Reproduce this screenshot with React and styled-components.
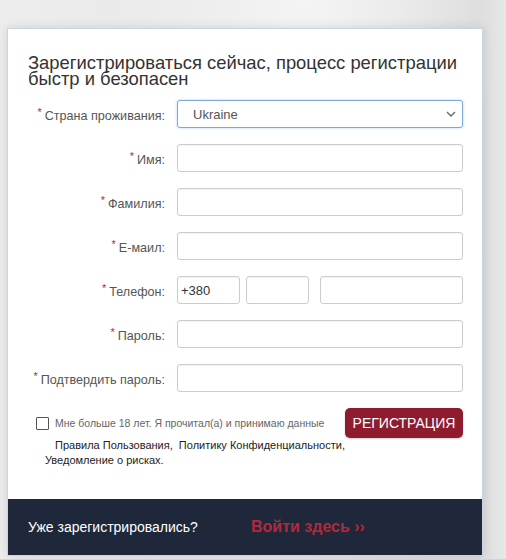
import React from 'react';
import styled, { createGlobalStyle } from 'styled-components';

const GlobalStyle = createGlobalStyle`
  html, body {
    margin: 0;
    padding: 0;
  }
  body {
    font-family: "Liberation Sans", Arial, sans-serif;
    background: #e9e9e9;
  }
  * {
    box-sizing: border-box;
  }
`;

const fields = [
  { label: 'Имя:' },
  { label: 'Фамилия:' },
  { label: 'Е-маил:' },
];

const App = () => {
  return (
    <>
      <GlobalStyle />
      <Page>
        <Card>
          <Body>
            <Title>Зарегистрироваться сейчас, процесс регистрации быстр и безопасен</Title>

            <Form>
              <Row>
                <Label><Star>*</Star>Страна проживания:</Label>
                <SelectWrap>
                  <Select defaultValue="UA">
                    <option value="UA">Ukraine</option>
                  </Select>
                  <Chevron width="10" height="6" viewBox="0 0 10 6">
                    <path d="M1 1l4 4 4-4" fill="none" stroke="#666" strokeWidth="1.3" />
                  </Chevron>
                </SelectWrap>
              </Row>

              {fields.map((f) => (
                <Row key={f.label}>
                  <Label><Star>*</Star>{f.label}</Label>
                  <Input type="text" />
                </Row>
              ))}

              <Row>
                <Label><Star>*</Star>Телефон:</Label>
                <PhoneGroup>
                  <Input type="text" defaultValue="+380" />
                  <Input type="text" />
                  <Input type="text" />
                </PhoneGroup>
              </Row>

              <Row>
                <Label><Star>*</Star>Пароль:</Label>
                <Input type="password" />
              </Row>

              <Row>
                <Label><Star>*</Star>Подтвердить пароль:</Label>
                <Input type="password" />
              </Row>
            </Form>

            <Terms>
              <Agreement>
                <CheckLine>
                  <Checkbox type="checkbox" />
                  <CheckText>Мне больше 18 лет. Я прочитал(а) и принимаю данные</CheckText>
                </CheckLine>
                <DocLine $indent={47}>Правила Пользования,&nbsp;&nbsp;Политику Конфиденциальности,</DocLine>
                <DocLine $indent={37}>Уведомление о рисках.</DocLine>
              </Agreement>
              <SubmitButton type="button">РЕГИСТРАЦИЯ</SubmitButton>
            </Terms>
          </Body>

          <Footer>
            <FooterText>Уже зарегистрировались?</FooterText>
            <LoginLink href="#">Войти здесь ››</LoginLink>
          </Footer>
        </Card>
      </Page>
    </>
  );
};

// Styled Components
const Page = styled.div`
  width: 506px;
  height: 559px;
  padding: 28px 23px 0 7px;
  overflow: hidden;
  background:
    radial-gradient(ellipse at 60% 0%, #f4f4f4 0%, rgba(244, 244, 244, 0) 45%),
    linear-gradient(90deg, #ededed 0%, #e6e6e6 60%, #dcdcdc 95%, #e8e8e8 100%);
`;

const Card = styled.div`
  width: 476px;
  background: #fff;
  border: 1px solid #c9d5e2;
  box-shadow: 0 0 10px rgba(0, 0, 0, 0.12);
`;

const Body = styled.div`
  padding: 26px 19px 31px 0;
`;

const Title = styled.h1`
  margin: 0 0 13px 20px;
  font-size: 18.4px;
  line-height: 16px;
  font-weight: 400;
  color: #333;
  max-width: 445px;
`;

const Form = styled.div`
  display: flex;
  flex-direction: column;
  gap: 16px;
`;

const Row = styled.div`
  display: grid;
  grid-template-columns: 157px 1fr;
  column-gap: 12px;
  align-items: center;
  height: 28px;
`;

const Label = styled.label`
  text-align: right;
  font-size: 12.6px;
  color: #555;
  padding-top: 3px;
  white-space: nowrap;
`;

const Star = styled.span`
  color: #c0243a;
  font-size: 11px;
  position: relative;
  top: -4px;
  margin-right: 3px;
`;

const SelectWrap = styled.div`
  position: relative;
  height: 28px;
`;

const Select = styled.select`
  appearance: none;
  width: 100%;
  height: 28px;
  border: 1px solid #7fa8d9;
  border-radius: 3px;
  background: #fff;
  padding: 0 0 0 15px;
  font-family: "Liberation Sans", Arial, sans-serif;
  font-size: 13px;
  color: #555;
  box-shadow: 0 0 3px rgba(102, 153, 221, 0.45);
  outline: none;
`;

const Chevron = styled.svg`
  position: absolute;
  right: 7px;
  top: 11px;
  pointer-events: none;
`;

const Input = styled.input`
  width: 100%;
  height: 28px;
  border: 1px solid #ccc;
  border-radius: 3px;
  background: #fff;
  padding: 0 3px;
  font-family: "Liberation Sans", Arial, sans-serif;
  font-size: 13px;
  color: #333;
  box-shadow: inset 0 1px 1px rgba(0, 0, 0, 0.05);
  outline: none;
`;

const PhoneGroup = styled.div`
  display: grid;
  grid-template-columns: 63px 63px 1fr;
  column-gap: 6px;
  height: 28px;

  & > input:last-child {
    margin-left: 5px;
    width: calc(100% - 5px);
  }
`;

const Terms = styled.div`
  display: flex;
  justify-content: space-between;
  align-items: flex-start;
  margin-top: 16px;
`;

const Agreement = styled.div`
  display: flex;
  flex-direction: column;
`;

const CheckLine = styled.div`
  display: flex;
  align-items: center;
  height: 30px;
  padding-left: 28px;
`;

const Checkbox = styled.input`
  appearance: none;
  width: 13px;
  height: 13px;
  margin: 0 6px 0 0;
  border: 1px solid #555;
  border-radius: 1px;
  background: #fff;
`;

const CheckText = styled.span`
  font-size: 10.5px;
  color: #666;
`;

const DocLine = styled.div`
  padding-left: ${(p) => p.$indent}px;
  font-size: 11px;
  line-height: 15px;
  color: #222;
  white-space: nowrap;
`;

const SubmitButton = styled.button`
  width: 122px;
  height: 30px;
  border: none;
  border-radius: 5px;
  background: #8e1c2e;
  color: #fff;
  font-family: "Liberation Sans", Arial, sans-serif;
  font-size: 14px;
  padding: 0;
  box-shadow: 0 1px 2px rgba(0, 0, 0, 0.2);
  cursor: pointer;
`;

const Footer = styled.div`
  display: flex;
  align-items: center;
  height: 56px;
  padding-left: 20px;
  background: #1e283a;
`;

const FooterText = styled.span`
  width: 223px;
  font-size: 14px;
  color: #fff;
`;

const LoginLink = styled.a`
  font-size: 16px;
  font-weight: 700;
  color: #b3283c;
  text-decoration: none;
`;

export default App;
